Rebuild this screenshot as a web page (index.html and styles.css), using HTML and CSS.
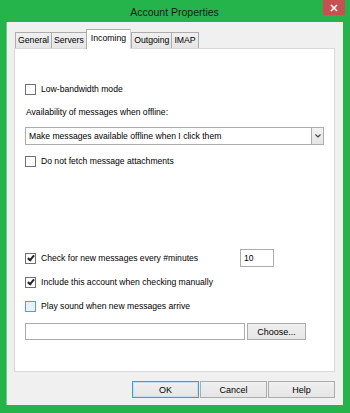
FILE: index.html
```html
<!DOCTYPE html>
<html lang="en">
<head>
  <meta charset="UTF-8" />
  <title>Account Properties</title>
  <link rel="stylesheet" href="styles.css">
</head>
<body>

  <div class="window">
    <div class="titlebar">
      <span class="title">Account Properties</span>
      <button class="close-btn">
        <svg width="8" height="8" viewBox="0 0 8 8"><path d="M1 1 L7 7 M7 1 L1 7" stroke="#fff" stroke-width="1.6"/></svg>
      </button>
    </div>

    <div class="client">
      <!-- tabs -->
      <div class="tabs">
        <div class="tab">General</div>
        <div class="tab">Servers</div>
        <div class="tab active">Incoming</div>
        <div class="tab">Outgoing</div>
        <div class="tab">IMAP</div>
      </div>

      <div class="panel">
        <label class="row first">
          <span class="check"></span>
          Low-bandwidth mode
        </label>

        <div class="caption">Availability of messages when offline:</div>

        <div class="select">
          <span>Make messages available offline when I click them</span>
          <span class="drop">
            <svg width="6" height="4" viewBox="0 0 6 4"><path d="M0.5 0.5 L3 3 L5.5 0.5" stroke="#444" stroke-width="1.2" fill="none"/></svg>
          </span>
        </div>

        <label class="row fetch">
          <span class="check"></span>
          Do not fetch message attachments
        </label>

        <div class="row minutes">
          <label class="row-label">
            <span class="check checked"></span>
            Check for new messages every #minutes
          </label>
          <div class="num">10</div>
        </div>

        <label class="row include">
          <span class="check checked"></span>
          Include this account when checking manually
        </label>

        <label class="row sound">
          <span class="check hover"></span>
          Play sound when new messages arrive
        </label>

        <div class="file-row">
          <div class="file-input"></div>
          <button class="btn choose">Choose...</button>
        </div>
      </div>

      <div class="buttons">
        <button class="btn default">OK</button>
        <button class="btn">Cancel</button>
        <button class="btn">Help</button>
      </div>
    </div>
  </div>

</body>
</html>
```

FILE: styles.css
```css
body {
  margin: 0;
  font-family: "Liberation Sans", Arial, sans-serif;
  font-size: 8.6px;
  color: #000;
  background: #23b14d;
}

.window {
  width: 350px;
  height: 413px;
  background: #25b34c;
  display: flex;
  flex-direction: column;
  box-sizing: border-box;
  padding: 0 7px 8px 6px;
}

.titlebar {
  height: 22px;
  position: relative;
  display: flex;
  justify-content: center;
  align-items: center;
}

.title {
  font-size: 10.5px;
  color: #0e1f12;
  margin-top: 1px;
}

.close-btn {
  position: absolute;
  top: 0;
  right: -2px;
  width: 22px;
  height: 15px;
  border: none;
  padding: 0;
  background: #c75050;
  display: flex;
  align-items: center;
  justify-content: center;
}

.client {
  flex: 1;
  background: #f0f0f0;
  border-left: 1px solid #6fcd8a;
  padding: 8px 8px 0 7px;
  display: flex;
  flex-direction: column;
}

/* tabs */
.tabs {
  display: flex;
  align-items: flex-end;
  height: 18px;
  padding-left: 1px;
  position: relative;
  z-index: 1;
}

.tab {
  height: 16px;
  line-height: 15px;
  padding: 0 2px;
  border: 1px solid #acacac;
  border-bottom: none;
  border-right: none;
  background: linear-gradient(#f0f0f0, #e5e5e5);
  box-sizing: border-box;
  font-size: 8.7px;
}

.tab:nth-child(5) {
  border-right: 1px solid #acacac;
}

.tab.active {
  height: 20px;
  line-height: 17px;
  background: #fff;
  border-right: 1px solid #d9d9d9;
  margin-bottom: -1px;
  padding: 0 4px;
}

.panel {
  height: 324px;
  box-sizing: border-box;
  background: #fff;
  border: 1px solid #d9d9d9;
  padding: 0 10px 0 10px;
}

.row {
  display: flex;
  align-items: center;
  height: 14px;
}

.row-label {
  display: flex;
  align-items: center;
}

.check {
  width: 9px;
  height: 9px;
  border: 1px solid #707070;
  background: #fff;
  margin-right: 5px;
  position: relative;
  flex-shrink: 0;
}

.check.checked::after {
  content: "";
  position: absolute;
  left: 3px;
  top: 0px;
  width: 2px;
  height: 5px;
  border: solid #222;
  border-width: 0 2px 2px 0;
  transform: rotate(40deg);
}

.check.hover {
  border-color: #5b9bd5;
  background: #e8f2fc;
}

.first { margin-top: 33px; }

.caption {
  height: 14px;
  line-height: 14px;
  margin-top: 9px;
  padding-left: 1px;
}

.select {
  margin-top: 8px;
  height: 18px;
  width: 299px;
  box-sizing: border-box;
  border: 1px solid #acacac;
  display: flex;
  align-items: center;
  justify-content: space-between;
  padding-left: 3px;
}

.drop {
  width: 11px;
  height: 16px;
  background: linear-gradient(#f2f2f2, #e4e4e4);
  border-left: 1px solid #acacac;
  display: flex;
  align-items: center;
  justify-content: center;
}

.fetch { margin-top: 9px; }

.minutes {
  margin-top: 81px;
  height: 18px;
  justify-content: flex-start;
}

.num {
  margin-left: auto;
  margin-right: 50px;
  width: 34px;
  height: 18px;
  box-sizing: border-box;
  border: 1px solid #acacac;
  line-height: 16px;
  padding-left: 3px;
  background: #fff;
}

.include { margin-top: 8px; }
.sound { margin-top: 10px; }

.file-row {
  margin-top: 10px;
  display: flex;
  gap: 2px;
  height: 17px;
}

.file-input {
  width: 220px;
  box-sizing: border-box;
  border: 1px solid #acacac;
  background: #fff;
}

.btn {
  font-family: inherit;
  font-size: 9px;
  color: #000;
  border: 1px solid #acacac;
  background: linear-gradient(#f0f0f0, #e5e5e5);
  padding: 0;
  height: 17px;
  margin: 0;
}

.choose { width: 59px; }

.buttons {
  display: flex;
  justify-content: flex-end;
  gap: 1px;
  margin-top: 9px;
}

.buttons .btn { width: 67px; }

.btn.default {
  border-color: #3c9ce0;
  box-shadow: inset 0 0 0 1px #c5e0f6;
}
```
